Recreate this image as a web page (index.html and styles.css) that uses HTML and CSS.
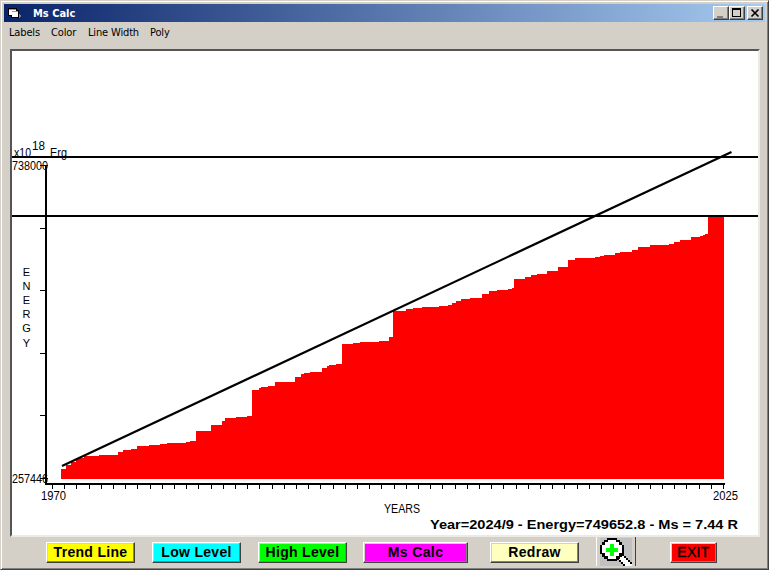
FILE: index.html
```
<!DOCTYPE html>
<html lang="en">
<head>
<meta charset="utf-8">
<title>Ms Calc</title>
<link rel="stylesheet" href="styles.css">
</head>
<body>
<div class="window">
  <header class="titlebar">
    <svg class="app-icon" width="14" height="12" viewBox="0 0 14 12" shape-rendering="crispEdges">
      <path d="M0 1h9v2h2v8H3V9H0z" fill="#000"/>
      <path d="M1 3h7v5H1zM4 5h6v5H4z" fill="#fff"/>
      <path d="M1 2h7v1H1zM4 4h6v1H4z" fill="#00d8d0"/>
      <path d="M11 7h1v1h1v2h-1v1h-1z" fill="#808080"/>
    </svg>
    <span class="title">Ms Calc</span>
    <div class="controls">
      <span class="control"><svg width="12" height="10" shape-rendering="crispEdges"><path d="M2 8h6v2H2z" fill="#808080"/></svg></span>
      <span class="control"><svg width="12" height="10" shape-rendering="crispEdges"><path d="M1 0h9v9H1zM2 2v6h7V2z" fill="#000" fill-rule="evenodd"/></svg></span>
      <span class="control close"><svg width="12" height="10"><path d="M2.5 1.5l7 7M9.5 1.5l-7 7" stroke="#000" stroke-width="1.7"/></svg></span>
    </div>
  </header>
  <nav class="menu">
    <span class="m-labels">Labels</span><span class="m-color">Color</span><span class="m-width">Line Width</span><span>Poly</span>
  </nav>
  <main class="chart">
    <svg width="746" height="484" viewBox="12 51 746 484">
      <g shape-rendering="crispEdges">
        <path fill="#f00" d="M61 479V469H66V465H71V462H76V458H84V456H99V455H118V452H123V450H131V449H137V446H149V445H160V444H167V443H186V442H190V441H196V431H211V425H222V421H225V418H236V417H247V416H252V390H259V388H261V387H268V386H275V382H295V377H301V374H304V373H310V372H322V371H322V368H327V366H329V365H336V364H342V344H353V343H360V342H379V341H389V337H393V311H406V309H413V308H422V307H439V306H448V305H452V303H456V301H461V299H470V298H482V294H489V291H497V290H508V289H512V288H514V279H525V277H531V275H537V274H547V271H558V267H568V260H575V258H595V257H600V256H604V255H615V253H620V252H632V250H638V247H650V245H669V244H674V242H680V240H691V237H700V236H703V235H705V234H708V217H709V216H724V479Z"/>
        <path fill="#000" d="M12 156H758V158H12zM12 215H758V217H12zM45 165H47V485H45zM45 483H725V485H45zM40 165H48V166H40zM40 228H45V229H40zM40 290H45V291H40zM40 353H45V354H40zM40 415H45V416H40zM40 478H48V479H40z"/>
        <path class="year-ticks" d="M52 487H724"/>
      </g>
      <path d="M62 466L731.5 152" stroke="#000" stroke-width="2.2"/>
      <g class="labels">
        <text x="14" y="157" textLength="17" lengthAdjust="spacingAndGlyphs">x10</text>
        <text x="32" y="150" textLength="13" lengthAdjust="spacingAndGlyphs">18</text>
        <text x="50" y="157" textLength="17" lengthAdjust="spacingAndGlyphs">Erg</text>
        <text x="12" y="170" textLength="36" lengthAdjust="spacingAndGlyphs">738000</text>
        <text x="12" y="483" textLength="36" lengthAdjust="spacingAndGlyphs">257446</text>
        <text x="41" y="500" textLength="25" lengthAdjust="spacingAndGlyphs">1970</text>
        <text x="713" y="500" textLength="25" lengthAdjust="spacingAndGlyphs">2025</text>
        <text x="384" y="513" textLength="36" lengthAdjust="spacingAndGlyphs">YEARS</text>
      </g>
      <g class="labels axis-name">
        <text x="26.5" y="276">E</text><text x="26.5" y="290">N</text><text x="26.5" y="304">E</text><text x="26.5" y="318">R</text><text x="26.5" y="332">G</text><text x="26.5" y="347">Y</text>
      </g>
      <text class="readout" x="430" y="529" textLength="308" lengthAdjust="spacingAndGlyphs">Year=2024/9 - Energy=749652.8 - Ms = 7.44 R</text>
    </svg>
  </main>
  <footer class="toolbar">
    <button class="btn yellow">Trend Line</button>
    <button class="btn cyan">Low Level</button>
    <button class="btn green">High Level</button>
    <button class="btn magenta">Ms Calc</button>
    <button class="btn cream">Redraw</button>
    <button class="zoom" aria-label="Zoom in">
      <svg width="32" height="28" viewBox="0 0 32 28" shape-rendering="crispEdges">
        <path d="M0 0h32v28H0z" fill="#c0c0c0"/>
        <path d="M18 18l4-1 10 8v3h-6l-8-7z" fill="#fff"/>
        <path d="M7 0h10v2h3v2h2v3h2v9h-2v3h-2v2h-3v2H7v-2H4v-2H2v-3H0V7h2V4h2V2h3z" fill="#000"/>
        <path d="M8 2h8v2h3v3h3v8h-3v3h-3v3H8v-3H5v-3H2V7h3V4h3z" fill="#fff"/>
        <path d="M10 6h4v4h4v4h-4v4h-4v-4H6v-4h4z" fill="#0f0"/>
        <path d="M22 16h2v2h2v2h2v2h2v2h2v2h-2v-2h-2v-2h-2v-2h-2v-2h-2zM17 20h2v2h2v2h2v2h2v2h-2v-2h-2v-2h-2v-2h-2z" fill="#000"/>
      </svg>
    </button>
    <button class="btn red">EXIT</button>
  </footer>
</div>
</body>
</html>
```
FILE: styles.css
```
* { box-sizing: border-box; }
body { margin: 0; overflow: hidden; }
.window {
  width: 769px; height: 570px; padding: 2px;
  display: flex; flex-direction: column;
  background: #d4d0c8;
  border: 1px solid #d4d0c8; border-right-color: #404040; border-bottom-color: #404040;
  box-shadow: inset 1px 1px #fff, inset -1px -1px #808080;
}
.titlebar {
  height: 18px; margin: 1px 1px 0; padding: 0 2px 0 4px;
  display: flex; align-items: center;
  background: linear-gradient(90deg, #0a246a, #a6caf0);
  color: #fff; font: bold 11px "DejaVu Sans Condensed", "DejaVu Sans", sans-serif;
}
.app-icon { flex: none; }
.title { margin-left: 11px; letter-spacing: 0; }
.controls { display: flex; margin-left: auto; }
.control {
  width: 16px; height: 14px; padding: 1px;
  background: #d4d0c8; border: 1px solid #fff;
  border-right-color: #404040; border-bottom-color: #404040;
  box-shadow: inset -1px -1px #808080;
}
.control svg { display: block; }
.close { margin-left: 2px; }
.menu {
  height: 27px; padding: 4px 0 0 6px; display: flex;
  font: 11px/13px "DejaVu Sans Condensed", "DejaVu Sans", sans-serif;
  letter-spacing: -0.15px; white-space: nowrap; color: #000;
}
.m-labels { width: 42px; }
.m-color { width: 37px; }
.m-width { width: 62px; }
.chart {
  width: 750px; height: 488px; margin-left: 7px;
  background: #fff; border: 2px solid; border-color: #555 #eceae5 #eceae5 #555;
}
.chart svg { display: block; }
.year-ticks { stroke: #000; stroke-width: 4px; stroke-dasharray: 1 11.2; fill: none; }
.labels { font: 12px "Liberation Sans", Arial, sans-serif; fill: #000; }
.axis-name { font-size: 11px; text-anchor: middle; }
.readout { font: bold 13px "Liberation Sans", Arial, sans-serif; fill: #000; }
.toolbar { height: 29px; padding-left: 43px; display: flex; align-items: flex-start; }
.btn {
  width: 89px; height: 21px; margin: 5px 17px 0 0; padding: 0;
  flex: none; border: 1px solid #fff; border-right-color: #404040; border-bottom-color: #404040;
  box-shadow: inset -1px -1px #808080, inset 1px 1px #d4d0c8;
  font: bold 14px/19px "Liberation Sans", Arial, sans-serif; letter-spacing: 0.3px; color: #000; white-space: nowrap;
}
.yellow { background: #ff0; }
.cyan { background: #0ff; }
.green { background: #0f0; margin-right: 16px; }
.magenta { background: #f0f; width: 105px; margin-right: 22px; letter-spacing: 0.4px; }
.cream { background: #ffffc0; }
.red { background: #f00; width: 47px; margin: 5px 0 0; font-weight: normal; -webkit-text-stroke: 0.4px #000; }
.zoom {
  width: 40px; height: 29px; margin: 0 34px 0 0; padding: 1px 0 0 3px; flex: none;
  background: #d4d0c8; border: 0 solid; border-width: 0 1px; border-color: #404040 #404040 #404040 #fff;
}
.zoom svg { display: block; }
```
